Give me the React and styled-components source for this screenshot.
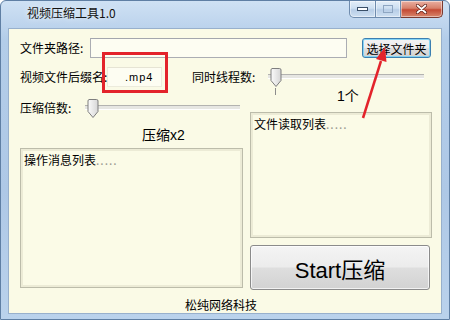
import React from "react";
import styled, { createGlobalStyle } from "styled-components";

const GlobalStyle = createGlobalStyle`
  html, body {
    margin: 0;
    padding: 0;
    background: #ffffff;
  }
  body {
    font-family: "Noto Sans CJK SC", "Liberation Sans", sans-serif;
    font-size: 12px;
    color: #000;
  }
`;

const Window = styled.div`
  width: 450px;
  height: 320px;
  box-sizing: border-box;
  display: flex;
  flex-direction: column;
  border: 1px solid #5f7fa4;
  border-radius: 6px 6px 0 0;
  background: linear-gradient(180deg, #cfe1f4 0%, #b3cde9 12%, #aec8e6 60%, #bad2ec 100%);
  overflow: hidden;
`;

const TitleBar = styled.div`
  height: 27px;
  display: flex;
  align-items: flex-start;
  flex-shrink: 0;
`;

const Title = styled.div`
  margin-left: 26px;
  line-height: 24px;
  font-size: 12px;
  color: #111;
  text-shadow: 0 0 6px rgba(255, 255, 255, 0.9);
`;

const Caption = styled.div`
  margin-left: auto;
  margin-right: 6px;
  display: flex;
`;

const CapButton = styled.div`
  width: ${(p) => p.$w}px;
  height: 17px;
  box-sizing: border-box;
  display: flex;
  align-items: center;
  justify-content: center;
  border: 1px solid ${(p) => (p.$close ? "#7a3a30" : "#6f8cae")};
  border-top: none;
  border-left: ${(p) => (p.$first ? "1px solid #6f8cae" : "none")};
  border-radius: ${(p) =>
    p.$close ? "0 0 5px 0" : p.$first ? "0 0 0 5px" : "0"};
  background: ${(p) =>
    p.$close
      ? "linear-gradient(180deg, #eab0a2 0%, #d7806b 45%, #c44a34 55%, #d8866c 100%)"
      : "linear-gradient(180deg, #e4eef8 0%, #cddff1 45%, #b7cde6 55%, #cfe0f2 100%)"};
  box-shadow: inset 0 0 0 1px rgba(255, 255, 255, 0.45);
`;

const Client = styled.div`
  flex: 1;
  margin: 0 7px 5px;
  position: relative;
  box-sizing: border-box;
  border: 1px solid #98b0cc;
  background: #fafae6;
  padding: 9px 10px 0 11px;
  display: flex;
  flex-direction: column;
`;

const Row = styled.div`
  height: 20px;
  display: flex;
  align-items: center;
  margin-top: ${(p) => p.$top || 0}px;
`;

const Label = styled.span`
  width: ${(p) => p.$w}px;
  margin-left: ${(p) => p.$left || 0}px;
  flex-shrink: 0;
  white-space: nowrap;
  font-size: 12px;
  line-height: 16px;
`;

const TextBox = styled.div`
  height: 20px;
  box-sizing: border-box;
  flex: ${(p) => (p.$w ? "none" : 1)};
  width: ${(p) => (p.$w ? `${p.$w}px` : "auto")};
  border: 1px solid ${(p) => (p.$faint ? "#ecebdc" : "#abadb3")};
  border-top-color: ${(p) => (p.$faint ? "#e6e4d4" : "#a3a6ad")};
  background: #fdfdf2;
  font-size: 11px;
  line-height: 18px;
  padding-left: ${(p) => p.$pad || 0}px;
  font-family: "Liberation Sans", sans-serif;
  letter-spacing: 1px;
`;

const WinButton = styled.div`
  box-sizing: border-box;
  width: ${(p) => p.$w}px;
  height: ${(p) => p.$h}px;
  margin-left: ${(p) => p.$left || 0}px;
  margin-top: ${(p) => p.$top || 0}px;
  flex-shrink: 0;
  display: flex;
  align-items: center;
  justify-content: center;
  border: 1px solid ${(p) => (p.$focus ? "#3c7fb1" : "#8b8b8b")};
  border-radius: 3px;
  background: linear-gradient(180deg, #f4f4f4 0%, #ececec 48%, #dedede 52%, #d2d2d2 100%);
  box-shadow: inset 0 0 0 1px
    ${(p) => (p.$focus ? "rgba(120, 210, 245, 0.9)" : "rgba(255, 255, 255, 0.7)")};
  font-size: ${(p) => p.$size || 12}px;
  font-family: "Liberation Sans", "Noto Sans CJK SC", sans-serif;
  color: #000;
`;

const SliderWrap = styled.div`
  position: relative;
  height: 20px;
  flex: ${(p) => (p.$w ? "none" : 1)};
  width: ${(p) => (p.$w ? `${p.$w}px` : "auto")};
  margin-right: ${(p) => p.$right || 0}px;
`;

const Track = styled.div`
  position: absolute;
  left: 0;
  right: 0;
  top: 7px;
  height: 3px;
  background: #e6e6e2;
  border-top: 1px solid #b3b3b0;
  border-bottom: 1px solid #ffffff;
`;

const Thumb = styled.svg`
  position: absolute;
  left: 2px;
  top: 1px;
`;

const Tick = styled.div`
  position: absolute;
  left: ${(p) => p.$x}px;
  top: 21px;
  width: 1px;
  height: 7px;
  background: #8c8c8c;
`;

const Body = styled.div`
  display: grid;
  grid-template-columns: 223px 1fr;
  column-gap: 7px;
  margin-right: -1px;
`;

const Column = styled.div`
  display: flex;
  flex-direction: column;
`;

const BigText = styled.div`
  font-size: 14px;
  line-height: 18px;
  height: 18px;
  margin-top: ${(p) => p.$top || 0}px;
  padding-left: ${(p) => p.$left || 0}px;
  font-family: "Liberation Sans", "Noto Sans CJK SC", sans-serif;
  white-space: nowrap;
`;

const ListBox = styled.div`
  box-sizing: border-box;
  height: ${(p) => p.$h}px;
  margin-top: ${(p) => p.$top || 0}px;
  border: 1px solid #bcbcaa;
  background: #fbfbe7;
  box-shadow: inset 0 0 0 2px #ecebd6;
  padding: 3px 3px;
  font-size: 12px;
  line-height: 16px;
  white-space: nowrap;
`;

const Dots = styled.span`
  color: #9a9a90;
  letter-spacing: 1px;
`;

const Footer = styled.div`
  margin-top: 7px;
  padding-left: 165px;
  font-size: 12px;
  line-height: 16px;
`;

const Annotations = styled.svg`
  position: absolute;
  left: 0;
  top: 0;
  pointer-events: none;
  overflow: visible;
`;

const RedBox = styled.div`
  position: absolute;
  left: 93px;
  top: 23px;
  width: 66px;
  height: 41px;
  box-sizing: border-box;
  border: 3px solid #e3232b;
`;

function Slider({ w, right, ticks }) {
  return (
    <SliderWrap $w={w} $right={right}>
      <Track />
      <Thumb width="12" height="20" viewBox="0 0 12 20">
        <defs>
          <linearGradient id="tg" x1="0" y1="0" x2="1" y2="0">
            <stop offset="0" stopColor="#fbfbfb" />
            <stop offset="1" stopColor="#d6d6d6" />
          </linearGradient>
        </defs>
        <path
          d="M2 0.5 H9.5 A1.5 1.5 0 0 1 11 2 V12.5 L6 18.5 L1 12.5 V2 A1.5 1.5 0 0 1 2 0.5 Z"
          fill="url(#tg)"
          stroke="#7e7e7e"
        />
      </Thumb>
      {ticks && <Tick $x={7} />}
    </SliderWrap>
  );
}

export default function App() {
  return (
    <>
      <GlobalStyle />
      <Window>
        <TitleBar>
          <Title>视频压缩工具1.0</Title>
          <Caption>
            <CapButton $w={27} $first>
              <svg width="11" height="4" viewBox="0 0 11 4">
                <rect x="0.5" y="0.5" width="10" height="3" fill="#fff" stroke="#3a4f68" />
              </svg>
            </CapButton>
            <CapButton $w={25}>
              <svg width="10" height="8" viewBox="0 0 10 8">
                <rect x="0.5" y="0.5" width="9" height="7" fill="none" stroke="#8ea6c2" strokeWidth="1" />
              </svg>
            </CapButton>
            <CapButton $w={42} $close>
              <svg width="11" height="10" viewBox="0 0 11 10">
                <path d="M1.5 1.5 L9.5 8.5 M9.5 1.5 L1.5 8.5" stroke="#5a1e16" strokeWidth="3.2" strokeLinecap="round" />
                <path d="M1.5 1.5 L9.5 8.5 M9.5 1.5 L1.5 8.5" stroke="#ffffff" strokeWidth="1.8" strokeLinecap="round" />
              </svg>
            </CapButton>
          </Caption>
        </TitleBar>

        <Client>
          <Row>
            <Label $w={70}>文件夹路径:</Label>
            <TextBox />
            <WinButton $w={69} $h={20} $left={15} $focus>
              选择文件夹
            </WinButton>
          </Row>

          <Row $top={9}>
            <Label $w={87}>视频文件后缀名:</Label>
            <TextBox $w={55} $faint $pad={17}>.mp4</TextBox>
            <Label $w={76} $left={30}>同时线程数:</Label>
            <Slider right={7} ticks />
          </Row>

          <Body>
            <Column>
              <Row $top={11}>
                <Label $w={65}>压缩倍数:</Label>
                <Slider w={155} />
              </Row>
              <BigText $top={8} $left={122}>压缩x2</BigText>
              <ListBox $h={140} $top={4}>
                操作消息列表<Dots>.....</Dots>
              </ListBox>
            </Column>
            <Column>
              <BigText $left={87}>1个</BigText>
              <ListBox $h={126} $top={7}>
                文件读取列表<Dots>.....</Dots>
              </ListBox>
              <WinButton $w={180} $h={45} $size={22} $top={7}>
                Start压缩
              </WinButton>
            </Column>
          </Body>

          <Footer>松纯网络科技</Footer>

          <RedBox />
          <Annotations width="434" height="286">
            <line x1="354" y1="89" x2="372" y2="32" stroke="#e3232b" strokeWidth="2.5" />
            <polygon points="376,18 377.5,33 367,30" fill="#e3232b" />
          </Annotations>
        </Client>
      </Window>
    </>
  );
}
